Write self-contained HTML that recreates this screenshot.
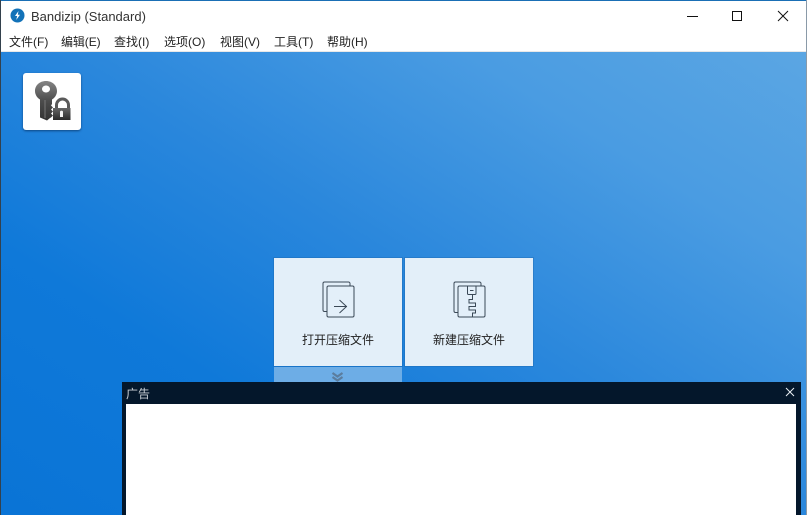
<!DOCTYPE html>
<html><head><meta charset="utf-8">
<style>
html,body{margin:0;padding:0;width:808px;height:515px;overflow:hidden;background:#fff}
body{position:relative;font-family:"Liberation Sans","Noto Sans CJK SC",sans-serif;color:#111}
div,span,svg{position:absolute;display:block}
.t{white-space:nowrap;line-height:16px}
.m{top:34px;font-size:12px;color:#222}
</style></head><body>
<div style="left:0;top:0;width:808px;height:1px;background:#1a6fb5"></div>
<div style="left:0;top:0;width:1px;height:515px;background:#33414d"></div>
<div style="left:806px;top:0;width:2px;height:515px;background:#fff"></div>
<div style="left:806px;top:0;width:1px;height:515px;background:#8a9aa8"></div>
<svg style="left:10px;top:8px" width="15" height="15" viewBox="0 0 15 15"><circle cx="7.500" cy="7.500" r="7" fill="#1272b8"/><path d="M8.500 3L5 8h2.200L6.200 12 10 6.800H7.800z" fill="#fff"/></svg>
<div class="t" style="left:31px;top:9px;font-size:13px;color:#333">Bandizip (Standard)</div>
<span class="t m" style="left:9px">文件(F)</span>
<span class="t m" style="left:61px;letter-spacing:-.1px">编辑(E)</span>
<span class="t m" style="left:114px">查找(I)</span>
<span class="t m" style="left:164px">选项(O)</span>
<span class="t m" style="left:220px">视图(V)</span>
<span class="t m" style="left:274px">工具(T)</span>
<span class="t m" style="left:327px">帮助(H)</span>
<svg style="left:680px;top:5px" width="120" height="22" viewBox="0 0 120 22" fill="none" stroke="#111" stroke-width="1"><path d="M7 11.500H18"/><rect x="52.500" y="6.500" width="9" height="9"/><path d="M98 6L108 16M108 6L98 16"/></svg>
<div style="left:1px;top:51px;width:805px;height:1px;background:#e8e8e8"></div>
<div style="left:1px;top:52px;width:805px;height:463px;background:linear-gradient(212deg,#5ba6e3 0%,#4a9ce2 22%,#2a87dc 48%,#0f79d9 72%,#0a74d6 100%)"></div>

<div style="left:23px;top:73px;width:58px;height:57px;background:#fff;border-radius:3px;box-shadow:0 1px 2px rgba(0,30,70,.6)"></div>
<svg style="left:23px;top:73px" width="58" height="57" viewBox="0 0 58 57">
<defs><linearGradient id="g" x1="0" y1="0" x2="0" y2="1"><stop offset="0" stop-color="#858585"/><stop offset=".5" stop-color="#4c4c4c"/><stop offset="1" stop-color="#333"/></linearGradient>
<linearGradient id="l" x1="0" y1="0" x2="0" y2="1"><stop offset="0" stop-color="#666"/><stop offset="1" stop-color="#2a2a2a"/></linearGradient></defs>
<path fill-rule="evenodd" d="M23 8C29.500 8 34 12.500 34 18c0 4-2.500 7-5 8.500V31l-1 1.500 2 2-2 2 2 2-2 2 2 2-2 2-1 .5-3 2.500-7-3V26.500C14.500 25 12 22 12 18 12 12.500 16.500 8 23 8zM23 12.500a4 3.500 0 1 0 .01 0z" fill="url(#g)"/>
<path d="M21.500 27h1v18h-1z" fill="#777"/>
<path d="M33.500 36v-4a6 6 0 0 1 12 0v4" fill="none" stroke="#5a5a5a" stroke-width="3"/>
<rect x="30" y="35" width="17.500" height="12" fill="url(#l)"/>
<path d="M37 38.500a1.700 1.700 0 0 1 3 0V44h-3z" fill="#f2f2f2"/>
</svg>

<div style="left:274px;top:258px;width:128px;height:108px;background:#e3eff9;box-shadow:0 0 0 1px rgba(30,100,170,.35)"></div>
<div style="left:405px;top:258px;width:128px;height:108px;background:#e3eff9;box-shadow:0 0 0 1px rgba(30,100,170,.35)"></div>
<div style="left:274px;top:367px;width:128px;height:15px;background:#6dade6"></div>
<svg style="left:331px;top:372px" width="13" height="10" viewBox="0 0 13 10" fill="none" stroke="#5b7d9e" stroke-width="2.200"><path d="M1.500 1L6.500 4.500 11.500 1M1.500 5L6.500 8.500 11.500 5"/></svg>

<svg style="left:322px;top:281px" width="34" height="37" viewBox="0 0 34 37" fill="none" stroke="#3a4856" stroke-width="1">
<path d="M4.500 30.500H2.500a1.500 1.500 0 0 1-1.500-1.500V2.500A1.500 1.500 0 0 1 2.500 1h24A1.500 1.500 0 0 1 28 2.500V4.500"/>
<rect x="5" y="5" width="27" height="31" rx="1.500"/>
<path d="M12 25.500H25M17.500 19L24.500 25.500 17.500 32"/>
</svg>
<svg style="left:453px;top:281px" width="34" height="37" viewBox="0 0 34 37" fill="none" stroke="#3a4856" stroke-width="1">
<path d="M5 31.500H2.500A1.500 1.500 0 0 1 1 30V2.500A1.500 1.500 0 0 1 2.500 1h24A1.500 1.500 0 0 1 28 2.500V5"/>
<rect x="5" y="5" width="27" height="31" rx="1.500"/>
<path d="M14.500 5V12.500a1 1 0 0 0 1 1H22a1 1 0 0 0 1-1V5M17 9.500H20.500"/>
<path d="M19.500 13.500V18.500H16V22H22.500V25.500H16V29H22.500V32H19.500V36"/>
</svg>
<div class="t" style="left:274px;top:332px;width:128px;text-align:center;font-size:12px;color:#222">打开压缩文件</div>
<div class="t" style="left:405px;top:332px;width:128px;text-align:center;font-size:12px;color:#222">新建压缩文件</div>

<div style="left:122px;top:382px;width:679px;height:133px;background:#04172b"></div>
<div class="t" style="left:126px;top:386px;font-size:12px;color:#c8ced4">广告</div>
<svg style="left:785px;top:387px" width="10" height="10" viewBox="0 0 10 10" fill="none" stroke="#e8edf2" stroke-width="1"><path d="M1 1L9 9M9 1L1 9"/></svg>
<div style="left:126px;top:404px;width:670px;height:111px;background:#fff"></div>
</body></html>
